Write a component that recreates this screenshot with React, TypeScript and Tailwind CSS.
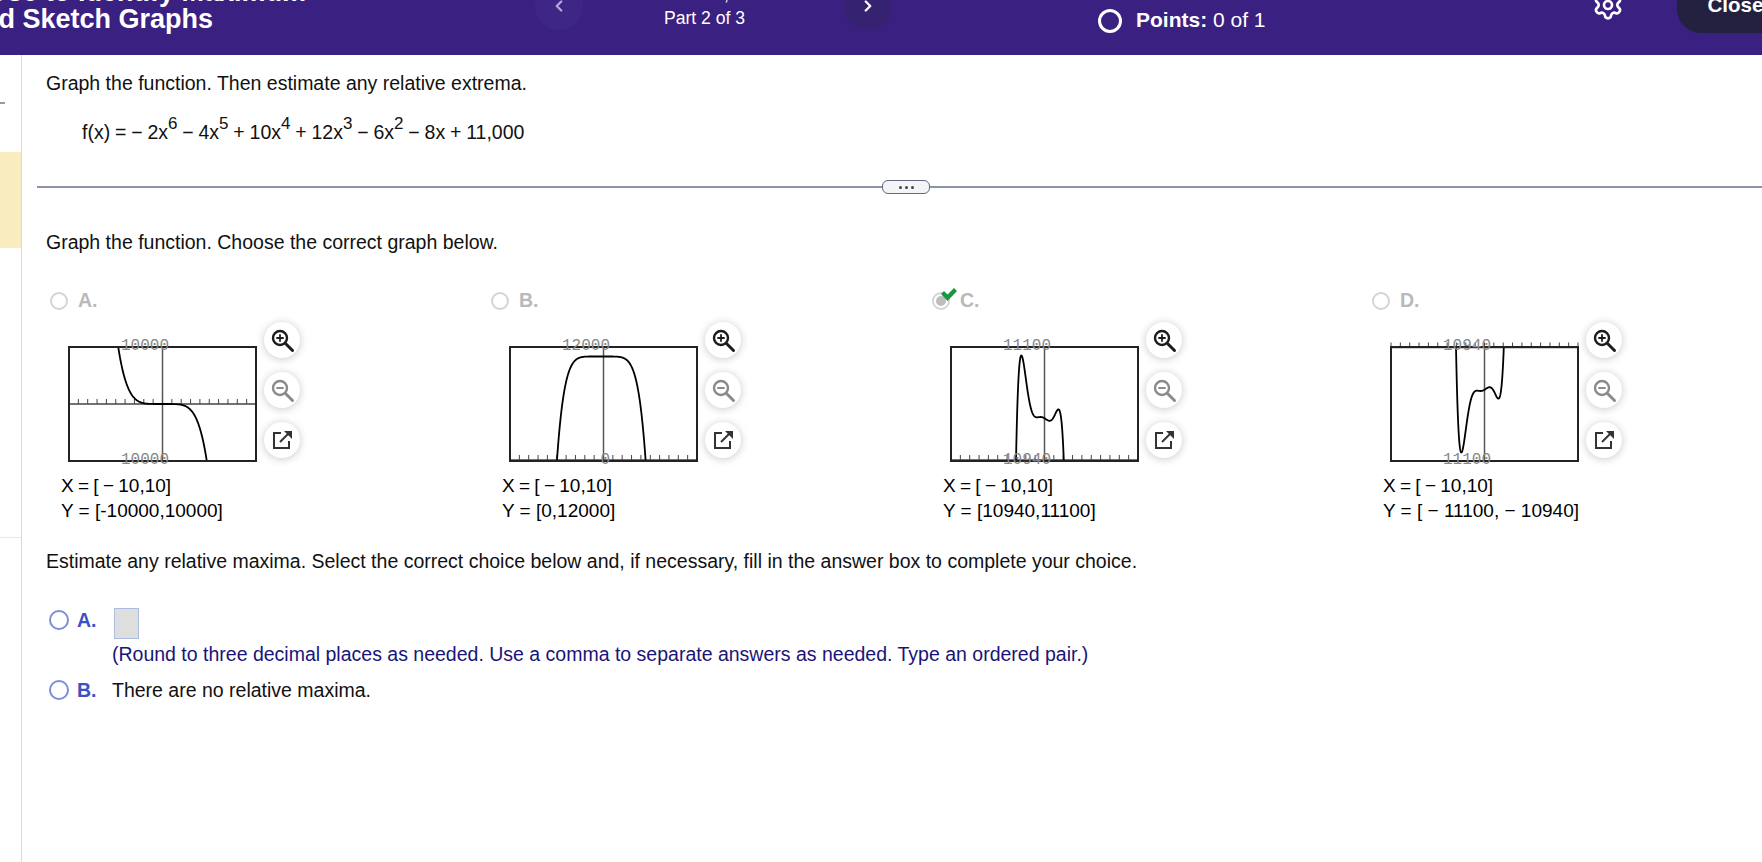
import { Settings, ChevronLeft, ChevronRight } from "lucide-react";

type Choice = {
  letter: string;
  fn: (x: number) => number;
  yMin: number;
  yMax: number;
  axis: number;
  top: string;
  bottom: string;
  xLabel: string;
  yLabel: string;
  selected?: boolean;
};

const poly = (x: number) =>
  -2 * x ** 6 - 4 * x ** 5 + 10 * x ** 4 + 12 * x ** 3 - 6 * x ** 2 - 8 * x + 11000;

const choices: Choice[] = [
  {
    letter: "A",
    fn: (x) => -4.2 * x ** 5,
    yMin: -10000,
    yMax: 10000,
    axis: 57,
    top: "10000",
    bottom: "10000",
    xLabel: "X = [ − 10,10]",
    yLabel: "Y = [-10000,10000]",
  },
  {
    letter: "B",
    fn: (x) => -(x ** 6) - 1.4 * x ** 5 + 11000,
    yMin: 0,
    yMax: 12000,
    axis: 113,
    top: "12000",
    bottom: "0",
    xLabel: "X = [ − 10,10]",
    yLabel: "Y = [0,12000]",
  },
  {
    letter: "C",
    fn: poly,
    yMin: 10940,
    yMax: 11100,
    axis: 113,
    top: "11100",
    bottom: "10940",
    xLabel: "X = [ − 10,10]",
    yLabel: "Y = [10940,11100]",
    selected: true,
  },
  {
    letter: "D",
    fn: (x) => -poly(x),
    yMin: -11100,
    yMax: -10940,
    axis: 0.5,
    top: "10940",
    bottom: "11100",
    xLabel: "X = [ − 10,10]",
    yLabel: "Y = [ − 11100, − 10940]",
  },
];

const W = 187;
const H = 114;

function curvePath(c: Choice) {
  const pts: string[] = [];
  for (let px = 0; px <= W; px += 0.25) {
    const x = (px / W) * 20 - 10;
    const y = ((c.yMax - c.fn(x)) / (c.yMax - c.yMin)) * H;
    if (y > -30 && y < H + 30) pts.push(`${pts.length ? "L" : "M"}${px} ${y.toFixed(2)}`);
  }
  return pts.join(" ");
}

function Graph({ c }: { c: Choice }) {
  const ticks = Array.from({ length: 21 }, (_, i) => (i * W) / 20);
  return (
    <svg width={W} height={H} viewBox={`0 0 ${W} ${H}`} className="mt-[36px] shrink-0 overflow-visible">
      <line x1={W / 2} y1="0" x2={W / 2} y2={H} stroke="#555" strokeWidth="1.5" />
      <line x1="0" y1={c.axis} x2={W} y2={c.axis} stroke="#444" strokeWidth="1.5" />
      {ticks.map((t) => (
        <line key={t} x1={t} y1={c.axis - 5} x2={t} y2={c.axis} stroke="#444" strokeWidth="1" />
      ))}
      <svg width={W} height={H}>
        <path d={curvePath(c)} fill="none" stroke="#000" strokeWidth="1.8" />
      </svg>
      <rect x="0" y="0" width={W} height={H} fill="none" stroke="#222" strokeWidth="2" />
      <text x={W / 2 + 6.5} y="3" textAnchor="end" fill="#888" fontSize="16" fontFamily="Liberation Mono, monospace">
        {c.top}
      </text>
      <text x={W / 2 + 6.5} y={H + 3} textAnchor="end" fill="#888" fontSize="16" fontFamily="Liberation Mono, monospace">
        {c.bottom}
      </text>
    </svg>
  );
}

function Magnifier({ color, plus }: { color: string; plus?: boolean }) {
  return (
    <svg width="25" height="25" viewBox="0 0 25 25" fill="none" stroke={color} strokeLinecap="round">
      <circle cx="10" cy="10" r="7" strokeWidth="2.4" />
      <path d="M15.5 15.5 L22.5 22.5" strokeWidth="3" />
      <path d="M7 10 H13" strokeWidth="1.8" />
      {plus && <path d="M10 7 V13" strokeWidth="1.8" />}
    </svg>
  );
}

function RoundButton({ children }: { children: React.ReactNode }) {
  return (
    <div className="flex h-[36px] w-[36px] items-center justify-center rounded-full bg-white shadow-[0_1px_8px_rgba(0,0,0,0.22)]">
      {children}
    </div>
  );
}

function GraphChoice({ c }: { c: Choice }) {
  return (
    <div>
      <div className="flex h-[20px] items-center">
        <div className="relative flex h-[18px] w-[18px] items-center justify-center rounded-full border-2 border-[#d4d4d4] bg-white">
          {c.selected && <div className="h-[10px] w-[10px] rounded-full bg-[#bdbdbd]" />}
          {c.selected && (
            <svg width="18" height="15" viewBox="0 0 18 15" className="absolute left-[6px] top-[-7px]">
              <path d="M1 7 L4 4 L7.5 7.5 L14 1 L17 4 L7.5 14 Z" fill="#18983c" />
            </svg>
          )}
        </div>
        <span className="ml-[10px] text-[19.5px] font-bold text-[#b9b9b9]">{c.letter}.</span>
      </div>
      <div className="flex">
        <div className="ml-[19px]">
          <Graph c={c} />
        </div>
        <div className="ml-[8px] mt-[11px] flex flex-col gap-[14px]">
          <RoundButton>
            <Magnifier color="#1c1c1c" plus />
          </RoundButton>
          <RoundButton>
            <Magnifier color="#8a8a8a" />
          </RoundButton>
          <RoundButton>
            <svg width="22" height="22" viewBox="0 0 22 22" fill="none" stroke="#333" strokeWidth="2">
              <path d="M10 4H3v15h15v-7" />
              <path d="M9 13 L18 4" />
              <path d="M13 2h8v8z" fill="#333" stroke="none" />
            </svg>
          </RoundButton>
        </div>
      </div>
      <div className="ml-[11px] mt-[12px] text-[19px] leading-[25px] text-black">
        <div className="[word-spacing:-1px]">{c.xLabel}</div>
        <div>{c.yLabel}</div>
      </div>
    </div>
  );
}

function Sup({ children }: { children: React.ReactNode }) {
  return <sup className="top-[-0.6em] text-[17px]">{children}</sup>;
}

export default function App() {
  return (
    <div className="flex h-screen w-full flex-col overflow-hidden bg-white font-['Liberation_Sans',Arial,sans-serif] text-[19.5px] text-[#111]">
      <header className="flex h-[55px] shrink-0 items-start overflow-hidden bg-[#3a2080] text-white">
        <div className="-ml-[33px] -mt-[20px] w-[571px] shrink-0 whitespace-nowrap text-[27px] font-bold leading-[30px]">
          <div className="ml-[21px] leading-[24px]">Use to Identify Maximum</div>
          <div>and Sketch Graphs</div>
        </div>
        <div className="-mt-[18px] ml-[-3px] flex h-[48px] w-[48px] shrink-0 items-center justify-center rounded-full bg-[#3e2687]">
          <ChevronLeft size={18} strokeWidth={3} className="text-[#b4a8d8]" />
        </div>
        <div className="-mt-[18px] w-[261px] shrink-0 pr-[18px] text-center text-[17.6px] leading-[24px]">
          <div>Section 2, 4.1</div>
          <div>Part 2 of 3</div>
        </div>
        <div className="-mt-[18px] flex h-[48px] w-[48px] shrink-0 items-center justify-center rounded-full bg-[#352372]">
          <ChevronRight size={18} strokeWidth={3} className="text-white" />
        </div>
        <div className="ml-[206px] mt-[9px] h-[24px] w-[24px] shrink-0 rounded-full border-[3px] border-white" />
        <div className="ml-[14px] mt-[8px] shrink-0 whitespace-nowrap text-[21px] leading-[24px]">
          <span className="font-bold">Points:</span> 0 of 1
        </div>
        <Settings size={32} strokeWidth={2} className="-mt-[11px] ml-[326px] shrink-0 text-white" />
        <div className="-mt-[10px] ml-[53px] h-[43px] w-[120px] shrink-0 rounded-bl-[24px] bg-[#23213f] pl-[31px] text-[20.5px] font-bold leading-[30px]">
          Close
        </div>
      </header>

      <div className="flex min-h-0 flex-1">
        <aside className="flex w-[22px] shrink-0 flex-col border-r border-[#d8d8de]">
          <div className="ml-0 mt-[47px] h-[2px] w-[5px] bg-[#999]" />
          <div className="mt-[48px] h-[96px] bg-[#f9ecbf]" />
          <div className="mt-[289px] h-px bg-[#e8e8ec]" />
        </aside>

        <main className="min-w-0 flex-1 pl-[15px]">
          <div className="pl-[9px] pt-[16px] leading-[24px]">Graph the function. Then estimate any relative extrema.</div>
          <div className="mt-[25px] pl-[45px] leading-[24px] [word-spacing:-0.6px]">
            f(x) = − 2x<Sup>6</Sup> − 4x<Sup>5</Sup> + 10x<Sup>4</Sup> + 12x<Sup>3</Sup> − 6x<Sup>2</Sup> − 8x + 11,000
          </div>

          <div className="mt-[36px] flex h-[14px] items-center">
            <div className="h-[2px] w-[845px] bg-[#8a94a6]" />
            <div className="flex h-[14px] w-[48px] shrink-0 items-center justify-center gap-[3px] rounded-[6px] border border-[#5f6b80] bg-[#f2f4f7]">
              <span className="h-[3px] w-[3px] rounded-full bg-[#444]" />
              <span className="h-[3px] w-[3px] rounded-full bg-[#444]" />
              <span className="h-[3px] w-[3px] rounded-full bg-[#444]" />
            </div>
            <div className="h-[2px] flex-1 bg-[#8a94a6]" />
          </div>

          <div className="mt-[36px] pl-[9px] leading-[24px]">Graph the function. Choose the correct graph below.</div>

          <div className="ml-[13px] mt-[37px] grid grid-cols-[441px_441px_440px_1fr]">
            {choices.map((c) => (
              <GraphChoice key={c.letter} c={c} />
            ))}
          </div>

          <div className="mt-[26px] pl-[9px] leading-[24px]">
            Estimate any relative maxima. Select the correct choice below and, if necessary, fill in the answer box to complete your choice.
          </div>

          <div className="ml-[12px] mt-[35px]">
            <div className="flex items-start">
              <div className="mt-[2px] h-[20px] w-[20px] shrink-0 rounded-full border-2 border-[#7b8fd6]" />
              <span className="ml-[8px] w-[35px] shrink-0 font-bold leading-[24px] text-[#3f51c0]">A.</span>
              <div>
                <div className="ml-[2px] h-[31px] w-[25px] border border-[#a9bde0] bg-[#dedede]" />
                <div className="mt-[3px] leading-[24px] text-[#1a1478]">
                  (Round to three decimal places as needed. Use a comma to separate answers as needed. Type an ordered pair.)
                </div>
              </div>
            </div>
            <div className="mt-[12px] flex items-start">
              <div className="mt-[2px] h-[20px] w-[20px] shrink-0 rounded-full border-2 border-[#7b8fd6]" />
              <span className="ml-[8px] w-[35px] shrink-0 font-bold leading-[24px] text-[#3f51c0]">B.</span>
              <div className="leading-[24px]">There are no relative maxima.</div>
            </div>
          </div>
        </main>
      </div>
    </div>
  );
}
